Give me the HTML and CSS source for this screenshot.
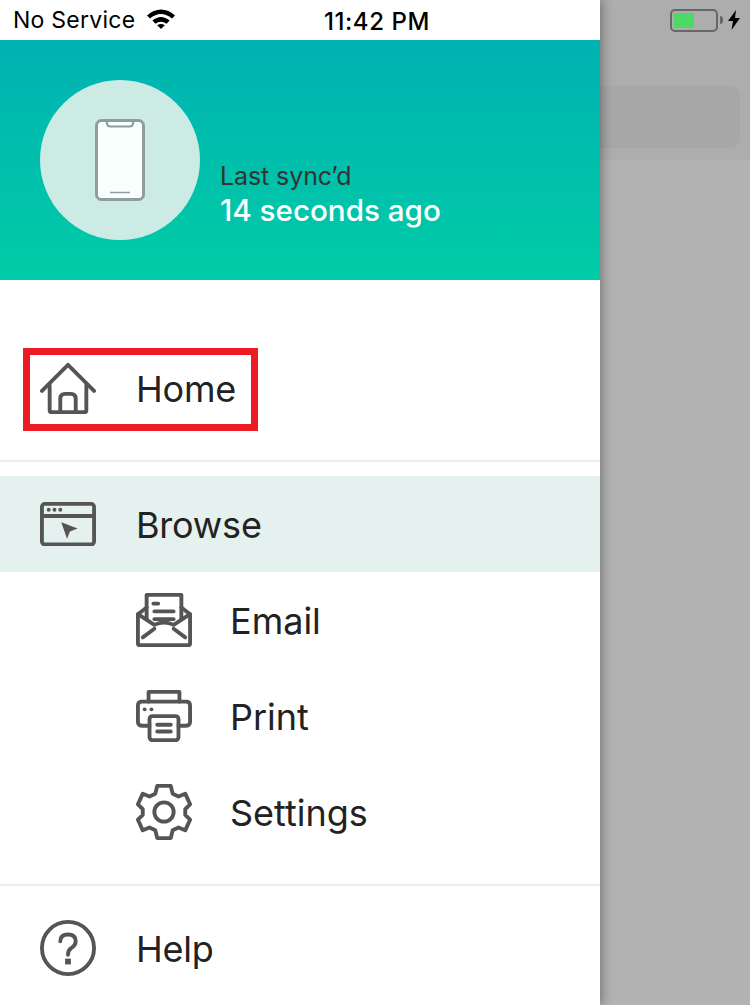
FILE: index.html
```html
<!DOCTYPE html>
<html lang="en">
<head>
    <meta charset="UTF-8">
    <meta name="viewport" content="width=device-width, initial-scale=1.0">
    <title>Menu</title>
    <link rel="stylesheet" href="styles.css">
</head>
<body>
    <div class="drawer">
        <div class="status-bar">
            <span class="carrier">No Service</span>
            <svg class="wifi" width="28" height="20" viewBox="0 0 28 20">
                <path d="M0 6.5 C8 -1.5 20 -1.5 28 6.5 L25 9.6 C18 3.6 10 3.6 3 9.6 Z" fill="#000"/>
                <path d="M5.4 11.6 C11 6.8 17 6.8 22.6 11.6 L19.6 14.8 C16 12 12 12 8.4 14.8 Z" fill="#000"/>
                <path d="M10.2 16.2 C12.6 14.6 15.4 14.6 17.8 16.2 L14 20 Z" fill="#000"/>
            </svg>
        </div>

        <div class="profile">
            <div class="avatar">
                <svg width="50" height="82" viewBox="0 0 50 82">
                    <rect x="1.5" y="1.5" width="47" height="79" rx="5" fill="#f8fffc" stroke="#8e9e9a" stroke-width="3"/>
                    <path d="M12 2 V4 Q12 7.5 15.5 7.5 H34.5 Q38 7.5 38 4 V2" fill="none" stroke="#8e9e9a" stroke-width="2"/>
                    <path d="M15 73.5 H35" stroke="#8e9e9a" stroke-width="1.5"/>
                </svg>
            </div>
            <div class="sync">
                <div class="sync-label">Last sync’d</div>
                <div class="sync-time">14 seconds ago</div>
            </div>
        </div>

        <div class="menu">
            <div class="menu-item menu-home">
                <svg class="icon" width="58" height="54" viewBox="0 0 58 54">
                    <path d="M2 30 L29 3 L56 30" class="line"/>
                    <path d="M10 24 V50 Q10 52 12 52 H46 Q48 52 48 50 V24" class="line"/>
                    <path d="M21 52 V38 Q21 33 26 33 H32 Q37 33 37 38 V52" class="line"/>
                </svg>
                <span>Home</span>
                <div class="highlight"></div>
            </div>
            <div class="divider divider-top"></div>
            <div class="menu-item active">
                <svg class="icon" width="58" height="46" viewBox="0 0 58 46">
                    <rect x="2" y="2" width="54" height="42" rx="3" class="line"/>
                    <path d="M2 14.5 H56" class="line"/>
                    <circle cx="9" cy="8" r="2" fill="#555"/>
                    <circle cx="15" cy="8" r="2" fill="#555"/>
                    <circle cx="21" cy="8" r="2" fill="#555"/>
                    <path d="M22 21 L39 27.5 L31 30.5 L28 38 Z" fill="#555"/>
                </svg>
                <span>Browse</span>
            </div>
            <div class="menu-item sub">
                <svg class="icon" width="58" height="56" viewBox="0 0 58 56">
                    <path d="M11 15 L2 22 V52 Q2 54 4 54 H54 Q56 54 56 52 V22 L47 15" class="line"/>
                    <path d="M11 27 V2 H47 V27" class="line"/>
                    <path d="M2 22 L19 33 Q29 28 39 33 L56 22" class="line"/>
                    <path d="M7 46 L19 37 M51 46 L39 37" class="line"/>
                    <path d="M18 11 H23 M19 19 H39 M19 27 H39" class="line"/>
                </svg>
                <span>Email</span>
            </div>
            <div class="menu-item sub">
                <svg class="icon" width="58" height="54" viewBox="0 0 58 54">
                    <path d="M13 12 V2 H45 V12" class="line"/>
                    <path d="M14 37 H6 Q2 37 2 33 V16 Q2 12 6 12 H52 Q56 12 56 16 V33 Q56 37 52 37 H44" class="line"/>
                    <rect x="14" y="27" width="30" height="25" rx="3" class="line"/>
                    <path d="M22 36 H36 M22 43 H36" class="line"/>
                    <circle cx="9" cy="20" r="2" fill="#555"/>
                    <circle cx="16" cy="20" r="2" fill="#555"/>
                </svg>
                <span>Print</span>
            </div>
            <div class="menu-item sub">
                <svg class="icon" width="58" height="58" viewBox="0 0 58 58">
                    <path d="M22 2 H36 L38 10 L44 13 L51 10 L56 21 L51 26 V32 L56 37 L51 48 L44 45 L38 48 L36 56 H22 L20 48 L14 45 L7 48 L2 37 L7 32 V26 L2 21 L7 10 L14 13 L20 10 Z" class="line"/>
                    <circle cx="29" cy="29" r="10" class="line"/>
                </svg>
                <span>Settings</span>
            </div>
            <div class="divider divider-bottom"></div>
            <div class="menu-item">
                <svg class="icon" width="58" height="58" viewBox="0 0 58 58">
                    <circle cx="29" cy="29" r="27" class="line"/>
                    <path d="M21 22 Q21 15 29 15 Q37 15 37 22 Q37 26 32.5 29 Q29 31 29 36" class="line"/>
                    <rect x="26" y="40" width="6" height="6" fill="#555"/>
                </svg>
                <span>Help</span>
            </div>
        </div>
    </div>

    <div class="backdrop">
        <div class="backdrop-top">
            <div class="battery-row">
                <div class="battery"><div class="battery-fill"></div></div>
                <div class="battery-cap"></div>
                <svg width="12" height="20" viewBox="0 0 12 20">
                    <path d="M8 0 L0 11 L5 11 L3.5 20 L12 8 L7 8 Z" fill="#000"/>
                </svg>
            </div>
            <div class="search-box"></div>
        </div>
    </div>

    <div class="clock">11:42 PM</div>
</body>
</html>
```

FILE: styles.css
```css
* {
    margin: 0;
    padding: 0;
    box-sizing: border-box;
}

body {
    font-family: "Inter", "Liberation Sans", sans-serif;
    width: 750px;
    height: 1005px;
    display: flex;
    overflow: hidden;
    position: relative;
    background-color: #b2b2b2;
}

.drawer {
    width: 600px;
    flex-shrink: 0;
    background-color: #fff;
    box-shadow: 2px 0 10px rgba(0, 0, 0, 0.35);
    position: relative;
    z-index: 2;
}

.status-bar {
    height: 40px;
    display: flex;
    align-items: center;
    padding-left: 13px;
    color: #000;
    font-size: 23px;
    letter-spacing: 0.25px;
}

.wifi {
    margin-left: 12px;
    margin-top: -3px;
}

.clock {
    position: absolute;
    top: 7px;
    left: 0;
    width: 754px;
    text-align: center;
    font-size: 24px;
    font-weight: 500;
    letter-spacing: 0.6px;
    color: #000;
    z-index: 3;
}

.profile {
    height: 240px;
    background: linear-gradient(to bottom, #00b2b2, #00cca6);
    display: flex;
    padding: 40px;
}

.avatar {
    width: 160px;
    height: 160px;
    border-radius: 50%;
    background-color: #cdebe5;
    display: flex;
    justify-content: center;
    align-items: center;
}

.sync {
    margin-left: 20px;
    padding-top: 80px;
}

.sync-label {
    font-size: 25px;
    letter-spacing: -0.1px;
    color: #333;
    line-height: 32px;
}

.sync-time {
    font-size: 29.6px;
    font-weight: 500;
    color: #fff;
    line-height: 36px;
}

.menu {
    padding-top: 60px;
}

.menu-item {
    height: 96px;
    display: flex;
    align-items: center;
    padding-left: 40px;
    font-size: 36px;
    letter-spacing: -0.2px;
    color: #222;
    position: relative;
}

.menu-item span {
    padding-top: 2px;
}

.icon {
    width: 56px;
    height: auto;
    margin-right: 40px;
}

.line {
    fill: none;
    stroke: #555;
    stroke-width: 4;
    stroke-linecap: round;
    stroke-linejoin: round;
}

.active {
    background-color: #e5f1ee;
}

.sub {
    padding-left: 136px;
    letter-spacing: 0;
}

.sub .icon {
    margin-right: 38px;
}

.divider {
    height: 2px;
    background-color: #e4f0ee;
}

.divider-top {
    margin-top: 24px;
    margin-bottom: 14px;
}

.divider-bottom {
    margin-top: 24px;
    margin-bottom: 14px;
}

.highlight {
    position: absolute;
    left: 23px;
    top: 8px;
    width: 235px;
    height: 83px;
    border: 7px solid #ed1c24;
}

.backdrop {
    flex: 1;
}

.backdrop-top {
    height: 160px;
    background-color: #adadad;
}

.battery-row {
    height: 40px;
    display: flex;
    align-items: center;
    padding-left: 70px;
}

.battery {
    width: 48px;
    height: 23px;
    border: 2px solid #676767;
    border-radius: 5px;
    padding: 2px;
}

.battery-fill {
    width: 20px;
    height: 100%;
    background-color: #4cd964;
}

.battery-cap {
    width: 3px;
    height: 8px;
    margin-left: 2px;
    margin-right: 5px;
    background-color: #676767;
    border-radius: 0 3px 3px 0;
}

.search-box {
    height: 62px;
    margin: 46px 10px 0 0;
    background-color: #a7a7a7;
    border-radius: 0 10px 10px 0;
}
```
